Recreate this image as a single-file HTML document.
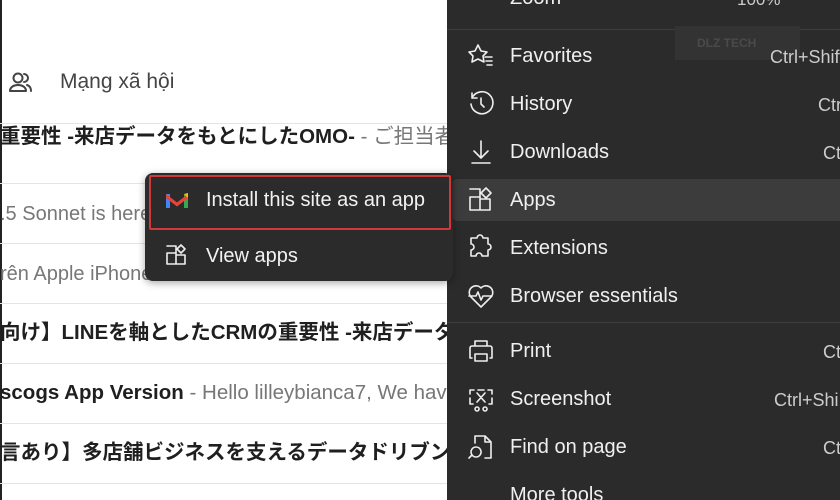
<!DOCTYPE html>
<html><head><meta charset="utf-8"><style>
*{margin:0;padding:0;box-sizing:border-box}
body{width:840px;height:500px;overflow:hidden;background:#fff;position:relative;font-family:"Liberation Sans","Noto Sans CJK JP",sans-serif}
.t{position:absolute;white-space:nowrap;line-height:1}
#left{position:absolute;left:0;top:0;width:447px;height:500px;overflow:hidden}
.line{position:absolute;left:0;width:447px;height:1px;background:#e4e4e4}
.l{font-size:19px;color:#222}
.b{font-weight:bold;color:#1f1f1f;font-size:20.5px}
.g{color:#777;font-weight:normal}
#panel{position:absolute;left:447px;top:0;width:393px;height:500px;background:#2b2b2b;overflow:hidden}
.mi{position:absolute;left:63px;font-size:20px;color:#f0f0f0;white-space:nowrap;line-height:1}
.sc{position:absolute;font-size:17px;color:#ccc;white-space:nowrap;line-height:1}
.ic{position:absolute;left:20px;width:28px;height:28px}
svg{stroke:#eee;fill:none;stroke-width:1.6;stroke-linecap:round;stroke-linejoin:round}
</style></head><body>
<div id="left">
<div style="position:absolute;left:0;top:0;width:2px;height:500px;background:#222"></div>
<svg style="position:absolute;left:8px;top:70px" width="26" height="24" viewBox="0 0 26 24"><circle cx="10" cy="8" r="4.5" stroke="#444" stroke-width="2"/><path d="M2 21c0-4 4-6 8-6s8 2 8 6z" stroke="#444" stroke-width="2"/><path d="M16 4a4 4 0 0 1 0 8M19 15c3 1 4 3 4 6" stroke="#444" stroke-width="2"/></svg>
<div class="t" style="left:60px;top:71px;font-size:21px;color:#444">Mạng xã hội</div>
<div class="line" style="top:123px"></div>
<div class="t l b" style="left:0;top:127px">重要性 -来店データをもとにしたOMO- <span class="g">- ご担当者</span></div>
<div class="line" style="top:183px"></div>
<div class="t l g" style="left:0;top:204px;font-size:20px">.5 Sonnet is here</div>
<div class="line" style="top:243px"></div>
<div class="t l g" style="left:0;top:264px;font-size:20px">rên Apple iPhone</div>
<div class="line" style="top:303px"></div>
<div class="t l b" style="left:0;top:323px">向け】LINEを軸としたCRMの重要性 -来店データ</div>
<div class="line" style="top:363px"></div>
<div class="t l b" style="left:0;top:383px">scogs App Version <span class="g">- Hello lilleybianca7, We have</span></div>
<div class="line" style="top:423px"></div>
<div class="t l b" style="left:0;top:443px">言あり】多店舗ビジネスを支えるデータドリブン</div>
<div class="line" style="top:483px"></div>
</div>

<div id="panel">
<div class="mi" style="top:-12px">Zoom</div>
<div class="sc" style="left:290px;top:-9px">100%</div>
<div style="position:absolute;left:0;top:29px;width:393px;height:1px;background:#3d3d3d"></div>
<div style="position:absolute;left:228px;top:26px;width:125px;height:34px;background:#333"></div>
<div style="position:absolute;left:250px;top:36px;font-size:12px;font-weight:bold;color:#4a4a4a">DLZ TECH</div>
<div style="position:absolute;left:6px;top:179px;width:400px;height:42px;background:#3c3c3c;border-radius:4px"></div>
<div style="position:absolute;left:0;top:322px;width:393px;height:1px;background:#3d3d3d"></div>
<svg class="ic" style="top:42px" viewBox="0 0 28 28"><path d="M11 3l3 6 6 1-4 4 1 6-6-3-6 3 1-6-4-4 6-1zM18 15h7M19 19h6M20 23h5"/></svg>
<div class="mi" style="top:46px">Favorites</div><div class="sc" style="left:323px;top:48px;font-size:18px">Ctrl+Shift</div>
<svg class="ic" style="top:90px" viewBox="0 0 28 28"><path d="M5 8a11 11 0 1 1-1 6M5 3v5h5M14 8v6l3 3"/></svg>
<div class="mi" style="top:94px">History</div><div class="sc" style="left:371px;top:96px;font-size:18px">Ctrl</div>
<svg class="ic" style="top:138px" viewBox="0 0 28 28"><path d="M14 3v17M7 13l7 7 7-7M5 25h18"/></svg>
<div class="mi" style="top:142px">Downloads</div><div class="sc" style="left:376px;top:144px;font-size:18px">Ct</div>
<svg class="ic" style="top:186px" viewBox="0 0 28 28"><path d="M3 11h10v13H3zM13 13h10v11H13zM3 3h10v8M19 2l5 5-5 5-5-5z"/></svg>
<div class="mi" style="top:190px">Apps</div>
<svg class="ic" style="top:234px" viewBox="0 0 28 28"><path d="M10 4a3 3 0 0 1 6 0h5v6a3 3 0 0 1 0 6v6h-6a3 3 0 0 0-6 0H4v-6a3 3 0 0 0 0-6V4z"/></svg>
<div class="mi" style="top:238px">Extensions</div>
<svg class="ic" style="top:282px" viewBox="0 0 28 28"><path d="M14 25L4 15a6 6 0 0 1 10-9 6 6 0 0 1 10 9zM2 14h7l2-4 3 8 2-4h9"/></svg>
<div class="mi" style="top:286px">Browser essentials</div>
<svg class="ic" style="top:337px" viewBox="0 0 28 28"><path d="M8 9V4h12v5M5 21H3V11a2 2 0 0 1 2-2h18a2 2 0 0 1 2 2v10h-2M8 17h12v7H8z"/></svg>
<div class="mi" style="top:341px">Print</div><div class="sc" style="left:376px;top:343px;font-size:18px">Ct</div>
<svg class="ic" style="top:385px" viewBox="0 0 28 28"><path d="M3 5h4M11 5h6M21 5h4v4M25 13v4M3 9V5M3 13v6h3M22 19h3v-2M10 8l8 9M18 8l-8 9M10 22a2 2 0 1 0 .1 0M18 22a2 2 0 1 0 .1 0"/></svg>
<div class="mi" style="top:389px">Screenshot</div><div class="sc" style="left:327px;top:391px;font-size:18px">Ctrl+Shi</div>
<svg class="ic" style="top:433px" viewBox="0 0 28 28"><path d="M8 10V3h10l6 6v16h-6M18 3v6h6M9 14a5 5 0 1 0 .1 0M5 22l-3 3"/></svg>
<div class="mi" style="top:437px">Find on page</div><div class="sc" style="left:376px;top:439px;font-size:18px">Ct</div>
<div class="mi" style="top:485px">More tools</div>
</div>

<div style="position:absolute;left:145px;top:173px;width:308px;height:108px;background:#2b2b2b;border-radius:8px;box-shadow:0 2px 8px rgba(0,0,0,.35)"></div>
<div style="position:absolute;left:149px;top:175px;width:302px;height:55px;border:2px solid #d0383a;border-radius:2px"></div>
<svg style="position:absolute;left:165px;top:191px" width="24" height="18" viewBox="0 0 24 18"><rect x="1" y="3" width="4" height="14" fill="#4285f4" stroke="none"/><rect x="19" y="3" width="4" height="14" fill="#34a853" stroke="none"/><path d="M1 3l11 8.5L23 3v4l-11 8.5L1 7z" fill="#ea4335" stroke="none"/><path d="M19 3l4-1v5z" fill="#fbbc04" stroke="none"/></svg>
<div class="t" style="left:206px;top:190px;font-size:20px;color:#f2f2f2">Install this site as an app</div>
<svg style="position:absolute;left:165px;top:243px" width="24" height="24" viewBox="0 0 24 24"><path d="M2 10h9v11H2zM11 12h9v9h-9zM2 3h9v7M16 2l4 4-4 4-4-4z"/></svg>
<div class="t" style="left:206px;top:246px;font-size:20px;color:#f2f2f2">View apps</div>
</body></html>
